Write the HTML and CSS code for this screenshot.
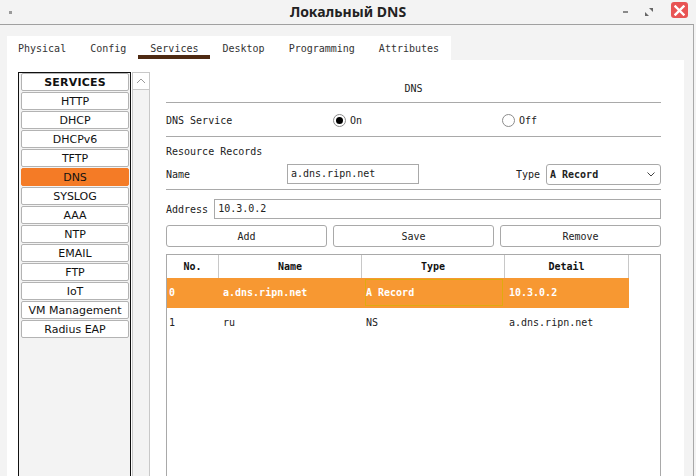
FILE: index.html
```html
<!DOCTYPE html>
<html>
<head>
<meta charset="utf-8">
<link rel="stylesheet" href="styles.css">
</head>
<body>
<div class="titlebar">
  <div class="tb-left"><span class="dot"></span></div>
  <div class="title">Локальный DNS</div>
  <div class="tb-right">
    <span class="min"></span>
    <svg class="max" width="8" height="8" viewBox="0 0 8 8"><polygon points="8,0 8,4 4,0" fill="#666"/><polygon points="0,8 0,4 4,8" fill="#666"/></svg>
    <span class="close"><svg width="11" height="11" viewBox="0 0 11 11"><path d="M1.5 1.5 L9.5 9.5 M9.5 1.5 L1.5 9.5" stroke="#fff" stroke-width="2.4" stroke-linecap="square"/></svg></span>
  </div>
</div>
<div class="frame">
  <div class="tabs">
    <div class="tab first">Physical</div>
    <div class="tab">Config</div>
    <div class="tab active">Services</div>
    <div class="tab">Desktop</div>
    <div class="tab">Programming</div>
    <div class="tab">Attributes</div>
  </div>
  <div class="panel">
    <div class="sidebar">
      <div class="list">
        <div class="item head">SERVICES</div>
        <div class="item">HTTP</div>
        <div class="item">DHCP</div>
        <div class="item">DHCPv6</div>
        <div class="item">TFTP</div>
        <div class="item sel">DNS</div>
        <div class="item">SYSLOG</div>
        <div class="item">AAA</div>
        <div class="item">NTP</div>
        <div class="item">EMAIL</div>
        <div class="item">FTP</div>
        <div class="item">IoT</div>
        <div class="item">VM Management</div>
        <div class="item">Radius EAP</div>
      </div>
      <div class="track">
        <div class="up"><svg width="10" height="6" viewBox="0 0 10 6"><path d="M1 5 L5 1 L9 5" fill="none" stroke="#9a9a9a" stroke-width="1"/></svg></div>
      </div>
    </div>
    <div class="main">
      <div class="heading">DNS</div>
      <div class="service">
        <span>DNS Service</span>
        <span class="radio-opt"><span class="radio on"></span>On</span>
        <span class="radio-opt"><span class="radio"></span>Off</span>
      </div>
      <div class="rr">Resource Records</div>
      <div class="name-row">
        <span class="lbl-name">Name</span>
        <span class="input name-input">a.dns.ripn.net</span>
        <span class="lbl-type">Type</span>
        <span class="select"><b>A Record</b><svg width="8" height="5" viewBox="0 0 8 5"><path d="M0.5 0.5 L4 4 L7.5 0.5" fill="none" stroke="#444" stroke-width="1"/></svg></span>
      </div>
      <div class="addr-row">
        <span>Address</span>
        <span class="input addr-input">10.3.0.2</span>
      </div>
      <div class="buttons">
        <div class="btn">Add</div>
        <div class="btn">Save</div>
        <div class="btn">Remove</div>
      </div>
      <div class="table">
        <div class="trow thead">
          <div class="th">No.</div>
          <div class="th">Name</div>
          <div class="th">Type</div>
          <div class="th">Detail</div>
        </div>
        <div class="trow selrow">
          <div class="td c0">0</div>
          <div class="td">a.dns.ripn.net</div>
          <div class="td focus">A Record</div>
          <div class="td">10.3.0.2</div>
        </div>
        <div class="trow">
          <div class="td c0">1</div>
          <div class="td">ru</div>
          <div class="td">NS</div>
          <div class="td">a.dns.ripn.net</div>
        </div>
      </div>
    </div>
  </div>
</div>
</body>
</html>
```
FILE: styles.css
```css
* { box-sizing: border-box; }
html, body { margin: 0; padding: 0; }
body {
  width: 696px;
  height: 476px;
  overflow: hidden;
  background: #f3f3f3;
  font-family: "DejaVu Sans Mono", monospace;
  font-size: 10px;
  color: #222;
}
.titlebar {
  height: 24px;
  display: grid;
  grid-template-columns: 1fr auto 1fr;
  align-items: center;
}
.tb-left { padding-left: 9px; display: flex; align-items: center; }
.dot { width: 3px; height: 3px; background: #9a9a9a; display: block; }
.title {
  font-family: "Noto Sans", sans-serif;
  font-weight: bold;
  font-size: 14px;
  color: #222;
  line-height: 24px;
}
.tb-right {
  display: flex;
  justify-content: flex-end;
  align-items: center;
  padding-right: 8px;
}
.min { width: 5px; height: 2px; background: #8a8a8a; display: block; margin-right: 17px; }
.max { display: block; margin-right: 18px; }
.close {
  width: 17px; height: 16px;
  background: #e85454;
  border-radius: 3px;
  display: flex; align-items: center; justify-content: center;
  margin-top: -4px;
}
.close svg { display: block; }
.frame {
  width: 694px;
  height: 452px;
  border-top: 1px solid #a0a0a0;
  border-right: 1px solid #a8a8a8;
  padding: 11px 0 0 7px;
}
.tabs {
  display: flex;
  width: 444px;
  height: 24px;
  background: #fff;
  align-items: flex-start;
}
.tab {
  padding: 6px 12px 0;
  line-height: 13px;
  border-bottom: 4px solid transparent;
  color: #333;
}
.tab.first { padding-left: 11px; }
.tab.active { border-bottom-color: #4e2a12; }
.panel {
  width: 677px;
  height: 420px;
  background: #fff;
  display: flex;
  padding: 12px 0 0 11px;
}
.sidebar { display: flex; width: 132px; flex: none; }
.list {
  width: 113px;
  height: 420px;
  border: 1px solid #111;
  background: #f3f3f3;
  padding: 0 1px 0 2px;
  display: flex;
  flex-direction: column;
  gap: 1px;
  font-family: "DejaVu Sans", sans-serif;
  font-size: 11px;
}
.item {
  height: 18px;
  background: #fff;
  border: 1px solid #b3b3b3;
  border-radius: 2px;
  text-align: center;
  line-height: 16px;
  padding-top: 1px;
  color: #111;
}
.item.head { font-weight: bold; letter-spacing: 0.2px; }
.item.sel { background: #f47b26; border-color: #f47b26; }
.track {
  width: 18px;
  margin-left: 1px;
  height: 420px;
  background: #f3f3f3;
  border: 1px solid #c8c8c8;
  border-bottom: none;
}
.up {
  height: 17px;
  background: #fff;
  border-bottom: 1px solid #c8c8c8;
  display: flex; align-items: center; justify-content: center;
}
.up svg { display: block; }
.main {
  width: 495px;
  margin-left: 16px;
  flex: none;
}
.heading {
  height: 31px;
  text-align: center;
  padding-top: 10px;
  line-height: 13px;
  border-bottom: 1px solid #a9a9a9;
}
.service {
  height: 34px;
  display: grid;
  grid-template-columns: 167px 169px 1fr;
  align-items: center;
  padding-top: 2px;
  border-bottom: 1px solid #a9a9a9;
}
.radio-opt { display: flex; align-items: center; gap: 4px; }
.radio {
  width: 13px; height: 13px;
  border: 1px solid #8c8c8c;
  border-radius: 50%;
  background: #fff;
  display: flex; align-items: center; justify-content: center;
}
.radio.on::after {
  content: "";
  width: 7px; height: 7px;
  border-radius: 50%;
  background: #000;
}
.rr {
  padding-top: 8px;
  line-height: 13px;
  height: 21px;
}
.name-row {
  display: flex;
  align-items: center;
  padding: 6px 0 5px;
  height: 32px;
  border-bottom: 1px solid #a9a9a9;
}
.lbl-name { width: 121px; }
.input {
  height: 20px;
  border: 1px solid #a9a9a9;
  background: #fff;
  line-height: 18px;
  padding-left: 3px;
}
.name-input { width: 132px; }
.lbl-type { margin-left: auto; margin-right: 6px; }
.select {
  width: 115px;
  height: 21px;
  border: 1px solid #a9a9a9;
  border-radius: 3px;
  display: flex;
  align-items: center;
  justify-content: space-between;
  padding: 0 5px 0 3px;
}
.select svg { display: block; }
.addr-row {
  display: flex;
  align-items: center;
  margin-top: 9px;
  gap: 6px;
}
.addr-input { flex: 1; }
.buttons {
  display: grid;
  grid-template-columns: 1fr 1fr 1fr;
  gap: 6px;
  margin-top: 6px;
}
.btn {
  height: 22px;
  border: 1px solid #a9a9a9;
  border-radius: 3px;
  text-align: center;
  line-height: 20px;
  padding-top: 1px;
  background: #fff;
}
.table {
  margin-top: 7px;
  height: 240px;
  border: 1px solid #a9a9a9;
  border-bottom: none;
}
.trow {
  display: grid;
  grid-template-columns: 52px 143px 143px 124px;
  width: 462px;
  height: 30px;
  align-items: center;
}
.thead { height: 23px; align-items: stretch; }
.th {
  font-weight: bold;
  text-align: center;
  line-height: 22px;
  padding-top: 1px;
  border-right: 1px solid #c8c8c8;
  color: #111;
}
.td {
  padding-left: 4px;
  height: 100%;
  line-height: 30px;
  white-space: nowrap;
}
.td.c0 { padding-left: 2px; }
.selrow { background: #f79832; color: #fff; font-weight: bold; }
.td.focus {
  border: 1px solid #e0aa10;
  margin: 1px 2px 2px 3px;
  height: 27px;
  line-height: 25px;
  padding-left: 0;
}
```
